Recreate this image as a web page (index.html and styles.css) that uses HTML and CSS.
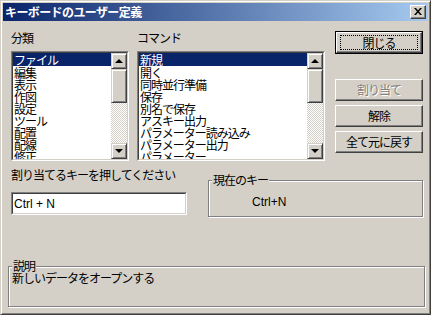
FILE: index.html
```html
<!DOCTYPE html>
<html lang="ja">
<head>
  <meta charset="UTF-8" />
  <meta name="viewport" content="width=device-width, initial-scale=1.0" />
  <title>キーボードのユーザー定義</title>
  <link rel="stylesheet" href="styles.css">
</head>
<body>
  <div class="window">
    <div class="titlebar">
      <span class="title">キーボードのユーザー定義</span>
      <span class="close-btn">
        <svg width="8" height="7" viewBox="0 0 8 7">
          <path d="M0 0h2l2 2.5L6 0h2L5 3.5 8 7H6L4 4.5 2 7H0l3-3.5z" fill="#000"/>
        </svg>
      </span>
    </div>

    <div class="client">
      <div class="top-row">
        <div class="col col-cat">
          <div class="label">分類</div>
          <div class="listbox">
            <div class="listbox-inner">
              <ul class="items">
                <li class="selected">ファイル</li>
                <li>編集</li>
                <li>表示</li>
                <li>作図</li>
                <li>設定</li>
                <li>ツール</li>
                <li>配置</li>
                <li>配線</li>
                <li>修正</li>
              </ul>
              <div class="scrollbar">
                <div class="sb-btn"><span class="arrow up"></span></div>
                <div class="sb-thumb"></div>
                <div class="sb-track"></div>
                <div class="sb-btn"><span class="arrow down"></span></div>
              </div>
            </div>
          </div>
        </div>

        <div class="col col-cmd">
          <div class="label">コマンド</div>
          <div class="listbox">
            <div class="listbox-inner">
              <ul class="items">
                <li class="selected">新規</li>
                <li>開く</li>
                <li>同時並行準備</li>
                <li>保存</li>
                <li>別名で保存</li>
                <li>アスキー出力</li>
                <li>パラメーター読み込み</li>
                <li>パラメーター出力</li>
                <li>パラメーター</li>
              </ul>
              <div class="scrollbar">
                <div class="sb-btn"><span class="arrow up"></span></div>
                <div class="sb-thumb"></div>
                <div class="sb-track"></div>
                <div class="sb-btn"><span class="arrow down"></span></div>
              </div>
            </div>
          </div>
        </div>

        <div class="buttons">
          <div class="btn-default">
            <div class="btn"><span class="focus">閉じる</span></div>
          </div>
          <div class="btn disabled btn-assign">割り当て</div>
          <div class="btn">解除</div>
          <div class="btn">全て元に戻す</div>
        </div>
      </div>

      <div class="mid-row">
        <div class="key-col">
          <div class="label">割り当てるキーを押してください</div>
          <div class="textbox">
            <div class="textbox-inner latin">Ctrl + N</div>
          </div>
        </div>
        <div class="group group-current">
          <span class="group-title">現在のキー</span>
          <div class="current-key latin">Ctrl+N</div>
        </div>
      </div>

      <div class="group group-desc">
        <span class="group-title">説明</span>
        <div class="desc-text">新しいデータをオープンする</div>
      </div>
    </div>
  </div>
</body>
</html>
```

FILE: styles.css
```css
* {
  box-sizing: border-box;
}
body {
  margin: 0;
  background: #d4d0c8;
  font-family: "Noto Sans CJK JP", sans-serif;
  font-size: 12px;
  line-height: 14px;
  letter-spacing: -1px;
  color: #000;
}
.latin {
  font-family: "Liberation Sans", "Noto Sans CJK JP", sans-serif;
  letter-spacing: 0;
}
.window {
  width: 431px;
  height: 315px;
  background: #d4d0c8;
  border-top: 1px solid #d4d0c8;
  border-left: 1px solid #d4d0c8;
  border-right: 1px solid #404040;
  border-bottom: 1px solid #404040;
  box-shadow: inset 1px 1px 0 #fff, inset -1px -1px 0 #808080;
  padding: 2px;
}
.titlebar {
  height: 18px;
  background: linear-gradient(to right, #0a246a, #a6caf0);
  display: flex;
  align-items: center;
  justify-content: space-between;
  padding: 0 2px 0 2px;
}
.title {
  color: #fff;
  font-weight: bold;
  letter-spacing: -0.6px;
}
.close-btn {
  width: 16px;
  height: 14px;
  background: #d4d0c8;
  border-top: 1px solid #fff;
  border-left: 1px solid #fff;
  border-right: 1px solid #404040;
  border-bottom: 1px solid #404040;
  box-shadow: inset -1px -1px 0 #808080;
  display: flex;
  align-items: center;
  justify-content: center;
  padding: 0 1px 1px 0;
}
.close-btn svg {
  display: block;
}
.client {
  padding: 10px 4px 0 8px;
}
.top-row {
  display: flex;
  height: 130px;
}
.label {
  height: 20px;
}
.col-cat {
  width: 118px;
  margin-right: 8px;
}
.col-cmd {
  width: 188px;
  margin-right: 10px;
}
.listbox {
  height: 110px;
  border-top: 1px solid #808080;
  border-left: 1px solid #808080;
  border-right: 1px solid #fff;
  border-bottom: 1px solid #fff;
}
.listbox-inner {
  height: 100%;
  display: flex;
  background: #fff;
  border-top: 1px solid #404040;
  border-left: 1px solid #404040;
  border-right: 1px solid #d4d0c8;
  border-bottom: 1px solid #d4d0c8;
}
.items {
  list-style: none;
  margin: 0;
  padding: 0;
  flex: 1;
  overflow: hidden;
}
.items li {
  height: 12px;
  line-height: 13px;
  padding-left: 1px;
  white-space: nowrap;
}
.items li.selected {
  height: 13px;
  background: #0a246a;
  color: #fff;
}
.scrollbar {
  width: 16px;
  display: flex;
  flex-direction: column;
}
.sb-btn, .sb-thumb {
  background: #d4d0c8;
  border-top: 1px solid #d4d0c8;
  border-left: 1px solid #d4d0c8;
  border-right: 1px solid #404040;
  border-bottom: 1px solid #404040;
  box-shadow: inset 1px 1px 0 #fff, inset -1px -1px 0 #808080;
}
.sb-btn {
  height: 16px;
  display: flex;
  align-items: center;
  justify-content: center;
}
.sb-thumb {
  height: 34px;
}
.sb-track {
  flex: 1;
  background: repeating-conic-gradient(#fff 0 25%, #d4d0c8 0 50%) 0 0 / 2px 2px;
}
.arrow {
  width: 0;
  height: 0;
  border-left: 4px solid transparent;
  border-right: 4px solid transparent;
}
.arrow.up {
  border-bottom: 4px solid #000;
  margin-top: -1px;
}
.arrow.down {
  border-top: 4px solid #000;
}
.buttons {
  width: 88px;
  display: flex;
  flex-direction: column;
  gap: 4px;
}
.btn {
  height: 22px;
  display: flex;
  align-items: center;
  justify-content: center;
  background: #d4d0c8;
  border-top: 1px solid #fff;
  border-left: 1px solid #fff;
  border-right: 1px solid #404040;
  border-bottom: 1px solid #404040;
  box-shadow: inset -1px -1px 0 #808080;
}
.btn-default {
  height: 23px;
  border: 1px solid #000;
}
.btn-default .btn {
  height: 21px;
}
.focus {
  display: flex;
  align-items: center;
  justify-content: center;
  width: 76px;
  height: 13px;
  outline: 1px dotted #000;
}
.btn-assign {
  margin-top: 21px;
}
.disabled {
  color: #808080;
  text-shadow: 1px 1px 0 #fff;
}
.mid-row {
  display: flex;
  margin-top: 7px;
  height: 49px;
}
.key-col {
  width: 176px;
}
.key-col .label {
  height: 24px;
}
.textbox {
  height: 23px;
  border-top: 1px solid #808080;
  border-left: 1px solid #808080;
  border-right: 1px solid #fff;
  border-bottom: 1px solid #fff;
}
.textbox-inner {
  height: 100%;
  background: #fff;
  border-top: 1px solid #404040;
  border-left: 1px solid #404040;
  border-right: 1px solid #d4d0c8;
  border-bottom: 1px solid #d4d0c8;
  padding: 3px 0 0 1px;
}
.group {
  position: relative;
  border: 1px solid #808080;
  box-shadow: 1px 1px 0 #fff, inset 1px 1px 0 #fff;
}
.group-title {
  position: absolute;
  top: -8px;
  left: 3px;
  padding: 0 1px;
  background: #d4d0c8;
}
.group-current {
  width: 215px;
  height: 37px;
  margin: 12px 0 0 21px;
}
.current-key {
  padding: 14px 0 0 43px;
}
.group-desc {
  width: 417px;
  height: 41px;
  margin: 49px 0 0 -3px;
}
.desc-text {
  padding: 4px 0 0 3px;
}
```
